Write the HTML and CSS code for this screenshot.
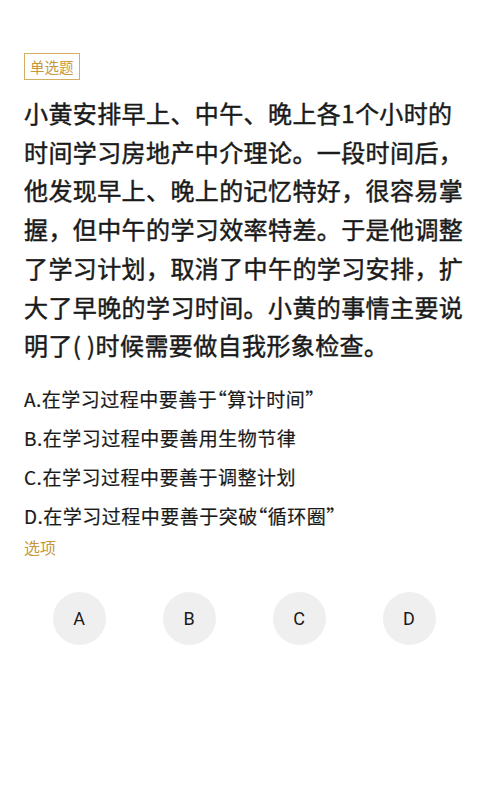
FILE: index.html
```html
<!DOCTYPE html>
<html lang="zh-CN">
<head>
  <meta charset="UTF-8" />
  <meta name="viewport" content="width=device-width, initial-scale=1.0"/>
  <title>单选题</title>
  <link rel="stylesheet" href="styles.css">
</head>
<body>
  <section class="question">
    <span class="tag">单选题</span>

    <p class="stem">小黄安排早上、中午、晚上各1个小时的时间学习房地产中介理论。一段时间后，他发现早上、晚上的记忆特好，很容易掌握，但中午的学习效率特差。于是他调整了学习计划，取消了中午的学习安排，扩大了早晚的学习时间。小黄的事情主要说明了( )时候需要做自我形象检查。</p>

    <ul class="options">
      <li>A.在学习过程中要善于“算计时间”</li>
      <li>B.在学习过程中要善用生物节律</li>
      <li>C.在学习过程中要善于调整计划</li>
      <li>D.在学习过程中要善于突破“循环圈”</li>
    </ul>

    <div class="label">选项</div>

    <div class="choices">
      <button>A</button>
      <button>B</button>
      <button>C</button>
      <button>D</button>
    </div>
  </section>
</body>
</html>
```

FILE: styles.css
```css
body {
  background-color: #fff;
  color: #1a1a1a;
  font-family: "Noto Sans CJK SC", "Noto Sans", sans-serif;
  margin: 0;
  padding: 0;
}

.question {
  width: 440px;
  padding: 53px 16px 0 24px;
}

.tag {
  display: inline-block;
  box-sizing: border-box;
  height: 27px;
  padding: 0 5px;
  border: 1px solid #d4ae62;
  color: #c7983a;
  font-size: 14.5px;
  line-height: 25px;
}

/* medium weight look, the font only ships regular and bold */
.stem {
  margin: 14px 0 0;
  font-size: 24px;
  letter-spacing: 0.4px;
  line-height: 38.7px;
  -webkit-text-stroke: 0.45px #1a1a1a;
}

.options {
  list-style: none;
  margin: 14px 0 0;
  padding: 0;
}

.options li {
  font-size: 19px;
  letter-spacing: 0.5px;
  line-height: 39px;
  font-feature-settings: "halt";
  white-space: nowrap;
  -webkit-text-stroke: 0.2px #1a1a1a;
}

.label {
  color: #c7983a;
  font-size: 16px;
  line-height: 24px;
}

.choices {
  display: flex;
  justify-content: space-around;
  margin-top: 33px;
}

.choices button {
  width: 53px;
  height: 53px;
  border: none;
  border-radius: 50%;
  background-color: #efefef;
  color: #1a1a1a;
  font-family: Roboto, "Noto Sans", sans-serif;
  font-size: 18px;
  padding: 0;
}
```
